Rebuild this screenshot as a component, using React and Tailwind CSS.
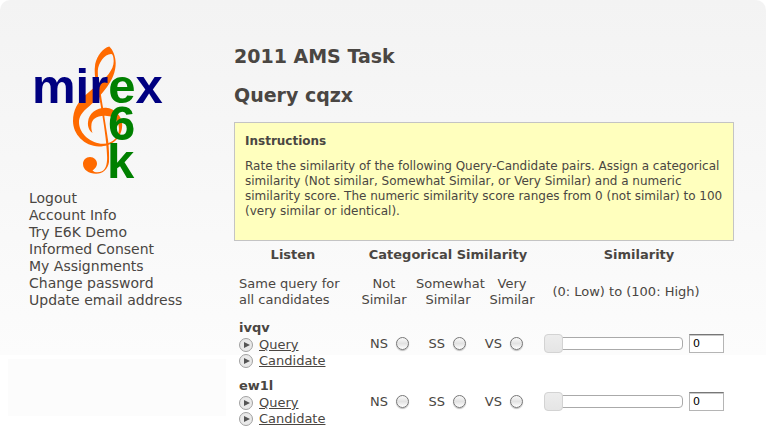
const menu = [
  'Logout',
  'Account Info',
  'Try E6K Demo',
  'Informed Consent',
  'My Assignments',
  'Change password',
  'Update email address',
];

const candidates = ['ivqv', 'ew1l'];

const ratings = [
  { code: 'NS', name: 'Not similar' },
  { code: 'SS', name: 'Somewhat similar' },
  { code: 'VS', name: 'Very similar' },
];

function Logo() {
  return (
    <svg width="136" height="140" viewBox="29 44 136 140" role="img" aria-label="mirex e6k">
      <g fill="#ff6a00">
        <path
          fillRule="evenodd"
          d="M109.3 46.500 C113 50 115.500 56 115.700 63 C115.800 72 112 80 107 87 C101 95 95 101 89.500 106 C82 112 78.500 117 79 123 C79.500 134 91 143.500 103 143.800 C114 144 119 135 119 129 C119 120 113 116 107 116 C97 115 92.500 119 91.500 124 C91 128 91.500 130.500 92.500 133 C89 131 87.500 126 88 122 C89 113 97 107.500 106 107.800 C115 108.500 122 116 122.200 125 C122 138 112 146.500 99 146.500 C84 146 73 134 73 121 C73 110 78 102 85 95.500 C89 92 94 88 96.500 85 C95 78 94 71 95.200 64 C97 56 103 48 109.300 46.500 Z M111.500 54 C105 53.500 98 63 97.800 71 C97.800 76 98.300 79 99 83 C105 79 114 70 113.700 61 C113.500 57 113 54.500 111.500 54 Z"
        />
        <path d="M99.500 83 C101 96 102 102 103.500 110 C105 122 107 132 108.300 142 C109 150 109.300 156 109 162 C108 169 103 173.800 96 173.800 C89 173.500 83 170 83 164 C83 160 86 157 90 157 C94 157 97 160 97 163.500 C97 167 94.500 169 92.500 170.500 C95 173 99 172.700 102 171.200 C106.500 169 107.500 162 107 155 C106.500 140 103.500 122 101.500 110 C100 101 98.500 94 97 86 Z" />
      </g>
      <g fontFamily="'Liberation Sans', Arial, sans-serif" fontWeight="700" fontSize="49">
        <text x="32" y="103" fill="#000080">
          mir<tspan fill="#008000">e</tspan>x
        </text>
        <text x="108" y="140" fill="#008000">6</text>
        <text x="107" y="178" fill="#008000">k</text>
      </g>
    </svg>
  );
}

function PlayLink({ children }) {
  return (
    <a href="#play" className="flex items-center gap-1.5 text-[13px] leading-4 underline">
      <svg width="14" height="14" viewBox="0 0 14 14" aria-hidden="true">
        <circle cx="7" cy="7" r="6.500" fill="#e9e9e9" stroke="#a0a0a0" />
        <path d="M5 4 L11 7 L5 10 Z" fill="#555" />
      </svg>
      {children}
    </a>
  );
}

function CandidateRow({ id }) {
  return (
    <tr className="h-[58px]">
      <th scope="row" className="pt-[3px] pl-[5px] text-left align-top font-normal">
        <div className="text-[13px] leading-[18px] font-bold">{id}</div>
        <PlayLink>Query</PlayLink>
        <PlayLink>Candidate</PlayLink>
      </th>
      <td colSpan={3} className="pb-[3px]">
        <div className="flex">
          {ratings.map((r) => (
            <label
              key={r.code}
              title={r.name}
              className="flex w-[57px] items-center justify-end gap-2 text-[13px] leading-4"
            >
              {r.code}
              <input
                type="radio"
                name={`rating-${id}`}
                className="size-[13px] appearance-none rounded-full border border-[#777] bg-linear-to-b from-[#fafafa] via-[#e2e2e2] to-white shadow-[0_1px_1px_#bbb]"
              />
            </label>
          ))}
        </div>
      </td>
      <td className="pb-[3px]">
        <div className="flex items-center gap-1.5 pr-2.5">
          <input
            type="range"
            min="0"
            max="100"
            defaultValue="0"
            aria-label={`Similarity of ${id}`}
            className="h-[13px] min-w-0 flex-1 appearance-none rounded-[4px] border border-[#aaa] bg-white [&::-webkit-slider-thumb]:-ml-px [&::-webkit-slider-thumb]:size-[19px] [&::-webkit-slider-thumb]:appearance-none [&::-webkit-slider-thumb]:rounded-[4px] [&::-webkit-slider-thumb]:border [&::-webkit-slider-thumb]:border-[#d3d3d3] [&::-webkit-slider-thumb]:bg-linear-to-b [&::-webkit-slider-thumb]:from-[#ededed] [&::-webkit-slider-thumb]:to-[#e5e5e5]"
          />
          <input
            type="text"
            defaultValue="0"
            aria-label={`Score of ${id}`}
            className="h-[19px] w-[35px] border border-[#b5b5b5] border-t-[#777] bg-white pl-[3px] text-[11px] text-black shadow-[inset_0_1px_0_#c8c8c8]"
          />
        </div>
      </td>
    </tr>
  );
}

export default function App() {
  return (
    <div className="flex rounded-t-[10px] bg-[linear-gradient(#f3f3f3,#fcfcfc_355px,#ffffff_355px)] pr-8 pb-1.5 font-['DejaVu_Sans',Verdana,sans-serif] text-[#4a4642]">
      <aside className="w-[234px] shrink-0 pt-11 pr-2">
        <div className="pl-[29px]">
          <Logo />
          <nav className="mt-1.5">
            <ul className="text-[14px] leading-[17px]">
              {menu.map((item) => (
                <li key={item}>
                  <a href="#menu">{item}</a>
                </li>
              ))}
            </ul>
          </nav>
        </div>
        <div className="mt-[50px] ml-2 h-[57px] bg-[#fcfcfc]" />
      </aside>
      <main className="min-w-0 flex-1 pt-11">
        <h1 className="text-[19px] leading-6 font-bold">2011 AMS Task</h1>
        <h2 className="mt-[15px] text-[19px] leading-6 font-bold">Query cqzx</h2>
        <section className="mt-[15px] border border-[#c4c4c4] bg-[#ffffbe] px-2.5 pt-2.5 pb-[21px]">
          <h3 className="text-[12px] leading-4 font-bold">Instructions</h3>
          <p className="mt-2.5 text-[12px] leading-[15px]">
            Rate the similarity of the following Query-Candidate pairs. Assign a categorical similarity (Not
            similar, Somewhat Similar, or Very Similar) and a numeric similarity score. The numeric similarity
            score ranges from 0 (not similar) to 100 (very similar or identical).
          </p>
        </section>
        <table className="w-full table-fixed">
          <colgroup>
            <col className="w-[118px]" />
            <col className="w-[64px]" />
            <col className="w-[64px]" />
            <col className="w-[64px]" />
            <col />
          </colgroup>
          <thead>
            <tr className="h-[27px] text-[13px] leading-4">
              <th scope="col">Listen</th>
              <th scope="col" colSpan={3}>Categorical Similarity</th>
              <th scope="col">Similarity</th>
            </tr>
          </thead>
          <tbody>
            <tr className="h-12 text-center text-[13px] leading-4">
              <td className="pl-[5px] text-left">Same query for<br />all candidates</td>
              <td>Not<br />Similar</td>
              <td className="whitespace-nowrap">Somewhat<br />Similar</td>
              <td>Very<br />Similar</td>
              <td className="pr-[26px]">(0: Low) to (100: High)</td>
            </tr>
            {candidates.map((id) => (
              <CandidateRow key={id} id={id} />
            ))}
          </tbody>
        </table>
      </main>
    </div>
  );
}
